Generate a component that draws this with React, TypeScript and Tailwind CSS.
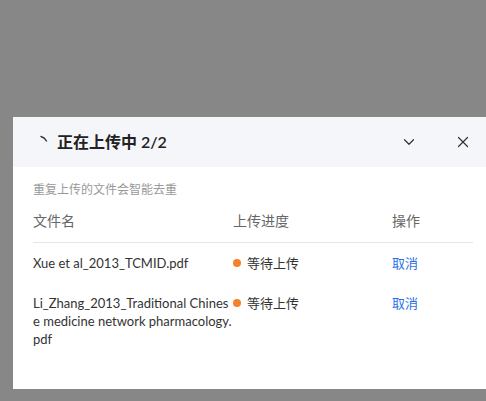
import { ChevronDown, X } from "lucide-react";

const files = [
  { lines: ["Xue et al_2013_TCMID.pdf"], status: "等待上传" },
  {
    lines: [
      "Li_Zhang_2013_Traditional Chines",
      "e medicine network pharmacology.",
      "pdf",
    ],
    status: "等待上传",
  },
];

export default function App() {
  return (
    <div
      className="h-[401px] w-[486px] overflow-hidden bg-[#878787] pt-[117px] pl-[13px]"
      style={{ fontFamily: 'Lato, "Noto Sans CJK SC", sans-serif' }}
    >
      <div className="h-[272px] w-[480px] bg-white">
        {/* Header */}
        <div className="flex h-[50px] items-center bg-[#f5f6fa] pl-[26px] pr-[15px]">
          <svg width="14" height="14" viewBox="0 0 14 14" className="mr-[4px] mt-[-2px]">
            <path
              d="M2 2.5 A9 9 0 0 1 7.5 7"
              fill="none"
              stroke="#333"
              strokeWidth="1.4"
              strokeLinecap="round"
            />
          </svg>
          <span className="text-[16px] font-semibold text-[#222]">正在上传中 2/2</span>
          <div className="ml-auto flex items-center gap-[36px] pr-[6px]">
            <ChevronDown className="h-[18px] w-[18px] text-[#333]" strokeWidth={1.6} />
            <X className="h-[18px] w-[18px] text-[#333]" strokeWidth={1.6} />
          </div>
        </div>

        {/* Body */}
        <div className="px-[20px] pt-[14px]">
          <p className="text-[12px] leading-[18px] text-[#999]">重复上传的文件会智能去重</p>
          <div className="mt-[12px] grid grid-cols-[200px_159px_1fr] border-b border-[#e5e5e5] pb-[11px] text-[14px] leading-[20px] text-[#666]">
            <span>文件名</span>
            <span>上传进度</span>
            <span>操作</span>
          </div>
          {files.map((f) => (
            <div
              key={f.lines[0]}
              className="grid grid-cols-[200px_159px_1fr] pt-[11px] pb-[11px] text-[13px] leading-[18px] text-[#333]"
            >
              <div className="flex flex-col whitespace-nowrap">
                {f.lines.map((l) => (
                  <span key={l}>{l}</span>
                ))}
              </div>
              <span className="flex items-start gap-[6px]">
                <span className="mt-[5px] h-[8px] w-[8px] rounded-full bg-[#f5822a]" />
                {f.status}
              </span>
              <span className="text-[#2a72e8]">取消</span>
            </div>
          ))}
        </div>
      </div>
    </div>
  );
}
